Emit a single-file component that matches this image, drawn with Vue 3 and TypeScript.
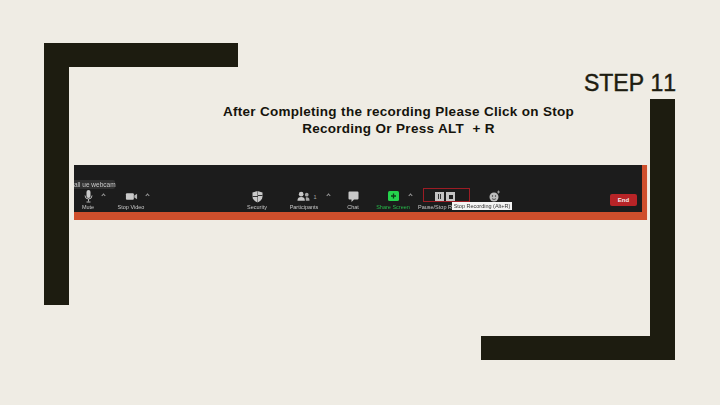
<script setup lang="ts">
const title: string = 'STEP 11'
</script>

<template>
  <main class="slide">
    <div class="bracket tl-h"></div>
    <div class="bracket tl-v"></div>
    <div class="bracket br-v"></div>
    <div class="bracket br-h"></div>

    <h1 class="title">{{ title }}</h1>
    <p class="message">After Completing the recording Please Click on Stop<br />Recording Or Press ALT&nbsp; + R</p>

    <section class="shot">
      <div class="toolbar">
        <div class="caption">all ue webcam</div>

        <div class="tool w-mute">
          <svg class="icon" viewBox="0 0 12 13"><rect x="4" y="0" width="4" height="8" rx="2" fill="#c9c9c9" /><path d="M2.5 5.5a3.5 3.5 0 0 0 7 0M6 9v2.5M4 12h4" fill="none" stroke="#b5b5b5" stroke-width="1" /></svg>
          <span class="label">Mute</span>
        </div>
        <span class="caret"></span>

        <div class="tool w-video">
          <svg class="icon" viewBox="0 0 14 13"><rect x="1" y="3" width="8.500" height="7" rx="1" fill="#c9c9c9" /><path d="M10 5.500l3-2v6l-3-2z" fill="#b5b5b5" /></svg>
          <span class="label">Stop Video</span>
        </div>
        <span class="caret"></span>

        <div class="tool w-security">
          <svg class="icon" viewBox="0 0 12 13"><path d="M6 1l5 1.500v4c0 3-2.500 5-5 6-2.500-1-5-3-5-6v-4z" fill="#c9c9c9" /><path d="M6 1v5H1v1h5v6h.5V6H11V5H6.500V1z" fill="#333" /></svg>
          <span class="label">Security</span>
        </div>

        <div class="tool w-people">
          <div class="people-icon">
            <svg class="icon" viewBox="0 0 14 13"><circle cx="4.500" cy="4" r="2.500" fill="#c9c9c9" /><path d="M0.500 11c0-3 1.500-4 4-4s4 1 4 4z" fill="#c9c9c9" /><circle cx="10.500" cy="4.500" r="2" fill="#a8a8a8" /><path d="M9.500 7.500c2.500-.5 4 .5 4 3.500h-4z" fill="#a8a8a8" /></svg>
            <span class="count">1</span>
          </div>
          <span class="label">Participants</span>
        </div>
        <span class="caret c-people"></span>

        <div class="tool w-chat">
          <svg class="icon" viewBox="0 0 12 13"><path d="M2 1.500h8a1 1 0 0 1 1 1v6a1 1 0 0 1-1 1H6.500L4 12V9.500H2a1 1 0 0 1-1-1v-6a1 1 0 0 1 1-1z" fill="#c9c9c9" /></svg>
          <span class="label">Chat</span>
        </div>

        <div class="tool w-share">
          <svg class="icon" viewBox="0 0 12 13"><rect x="0.500" y="1" width="11" height="10" rx="1.500" fill="#25d24c" /><path d="M6 3.500v5M3.500 6h5" stroke="#0d3d18" stroke-width="1.300" /></svg>
          <span class="label green">Share Screen</span>
        </div>
        <span class="caret"></span>

        <div class="tool w-record">
          <div class="record-icons">
            <span class="rec-btn"><i class="pause"></i><i class="pause"></i></span>
            <span class="rec-btn"><i class="stop"></i></span>
          </div>
          <span class="label rec-label">Pause/Stop R</span>
          <div class="highlight"></div>
          <div class="tooltip">Stop Recording (Alt+R)</div>
        </div>

        <div class="tool w-react">
          <svg class="icon" viewBox="0 0 12 13"><circle cx="5.500" cy="7" r="4.500" fill="#bdbdbd" /><circle cx="4" cy="6" r=".7" fill="#333" /><circle cx="7" cy="6" r=".7" fill="#333" /><path d="M3.500 8.500c1 1.200 3 1.200 4 0" fill="none" stroke="#333" stroke-width=".8" /><path d="M10 .5v3M8.500 2h3" stroke="#aaa" stroke-width=".8" /></svg>
        </div>

        <button class="end" type="button">End</button>
      </div>
      <div class="shot-stripe"></div>
    </section>
  </main>
</template>

<style scoped>
.slide {
  position: relative;
  width: 720px;
  height: 405px;
  overflow: hidden;
  background: #efece4;
  color: #1d1c10;
  font-family: "Liberation Sans", Arial, sans-serif;
  display: flex;
  flex-direction: column;
}
.bracket { position: absolute; background: #1d1c10; }
.tl-h { left: 44px; top: 43px; width: 194px; height: 24px; }
.tl-v { left: 44px; top: 43px; width: 25px; height: 262px; }
.br-v { left: 650px; top: 99px; width: 25px; height: 261px; }
.br-h { left: 481px; top: 336px; width: 194px; height: 24px; }

.title {
  margin: 69px 44px 0 0;
  font-size: 23px;
  line-height: 28px;
  font-weight: 400;
  font-kerning: none;
  text-align: right;
  -webkit-text-stroke: 0.45px #1d1c10;
}
.message {
  margin: 6px 0 0 198.500px;
  width: 400px;
  font-size: 13.500px;
  letter-spacing: 0.27px;
  line-height: 17px;
  font-weight: 700;
  text-align: center;
  color: #15140c;
  word-spacing: 0.2px;
}
.shot {
  margin: 28px 0 0 74px;
  width: 573px;
  height: 55px;
  background: #cf4f2c;
  box-shadow: 1px 0 0 #f6e3d6;
  display: flex;
  flex-direction: column;
}
.toolbar {
  position: relative;
  width: 568px;
  height: 47px;
  box-sizing: border-box;
  padding-top: 25px;
  background: #1c1c1c;
  display: flex;
  align-items: flex-start;
}
.shot-stripe { height: 7px; }

.caption {
  position: absolute;
  left: 0;
  top: 15px;
  width: 41px;
  height: 9px;
  background: #303030;
  color: #c8c8c8;
  font-size: 6.500px;
  line-height: 9px;
  white-space: nowrap;
  border-radius: 0 2px 2px 0;
  filter: blur(0.3px);
}
.tool {
  position: relative;
  display: flex;
  flex-direction: column;
  align-items: center;
  flex: none;
}
.icon { display: block; width: 13px; height: 13px; }
.label {
  margin-top: 1px;
  font-size: 5.500px;
  line-height: 7px;
  color: #c8c8c8;
  white-space: nowrap;
  filter: blur(0.3px);
}
.label.green { color: #27b84a; }
.rec-label { align-self: flex-start; }
.caret {
  flex: none;
  width: 3px;
  height: 3px;
  margin-top: 4px;
  box-sizing: border-box;
  border-left: 1px solid #9a9a9a;
  border-top: 1px solid #9a9a9a;
  transform: rotate(45deg);
}
.w-mute { width: 28px; }
.w-video { width: 30px; margin-left: 11px; }
.w-security { width: 30px; margin-left: 93px; }
.w-people { width: 36px; margin-left: 14px; }
.c-people { margin-left: 5px; }
.w-chat { width: 30px; margin-left: 8px; }
.w-share { width: 32px; margin-left: 9px; }
.w-record { width: 54px; margin-left: 6px; }
.w-react { width: 19px; margin-left: 13px; }

.people-icon { display: flex; align-items: center; gap: 3px; transform: translateX(3px); }
.count { font-size: 5.500px; color: #a8a8a8; }
.record-icons { display: flex; gap: 2px; height: 13px; align-items: center; }
.rec-btn {
  width: 9px;
  height: 9px;
  background: #c4c4c4;
  display: flex;
  align-items: center;
  justify-content: center;
  gap: 1px;
}
.rec-btn .pause { width: 1px; height: 5px; background: #333; }
.rec-btn .stop { width: 4px; height: 4px; background: #222; }
.highlight {
  position: absolute;
  left: 5px;
  top: -2px;
  width: 47px;
  height: 14px;
  box-sizing: border-box;
  border: 1px solid #9c1c24;
}
.tooltip {
  position: absolute;
  left: 34px;
  top: 12px;
  width: 60px;
  height: 8px;
  background: #f4f4f4;
  color: #333;
  font-size: 5.500px;
  line-height: 8px;
  text-align: center;
  white-space: nowrap;
  filter: blur(0.2px);
}
.end {
  position: absolute;
  left: 536px;
  top: 29px;
  width: 27px;
  height: 12px;
  padding: 0;
  border: 0;
  border-radius: 2px;
  background: #b82427;
  color: #f2f2f2;
  font: 700 6px/12px "Liberation Sans", Arial, sans-serif;
}
</style>
